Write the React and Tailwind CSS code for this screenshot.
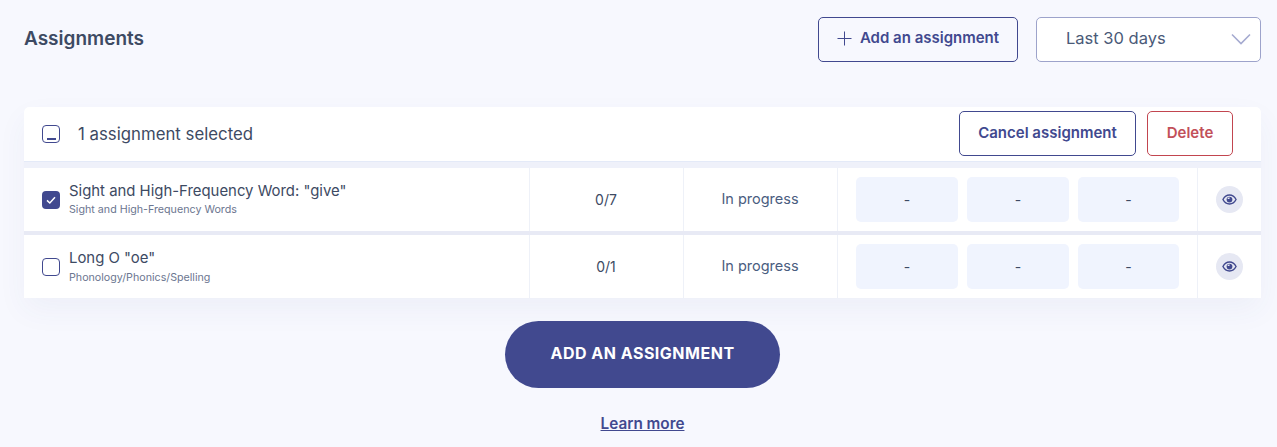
import React from "react";

function Eye() {
  return (
    <svg width="15" height="15" viewBox="0 0 24 24" fill="none" aria-hidden="true">
      <path d="M1.5 12C4 7.2 7.6 4.8 12 4.8S20 7.2 22.5 12C20 16.8 16.4 19.2 12 19.2S4 16.8 1.5 12Z" stroke="#41498f" strokeWidth="2.2" />
      <circle cx="12" cy="12" r="4.6" fill="#41498f" />
      <path d="M12 8.5a3.5 3.5 0 0 0-3.4 2.8h3.4Z" fill="#e6e8f3" />
    </svg>
  );
}

function Row({ title, sub, score, checked, last }) {
  return (
    <div className="flex h-[63px] bg-white">
      <div className="flex w-[506px] items-center border-r border-[#eef1f8] pl-[18px]">
        {checked ? (
          <div className="flex h-[18px] w-[18px] items-center justify-center rounded-[4px] bg-[#41498f]">
            <svg width="12" height="12" viewBox="0 0 12 12" fill="none">
              <path d="M2 6.4 4.8 9 10 3.2" stroke="#fff" strokeWidth="1.5" />
            </svg>
          </div>
        ) : (
          <div className="h-[18px] w-[18px] rounded-[4px] border-[1.5px] border-[#41498f] bg-white" />
        )}
        <div className="ml-[9px] flex flex-col self-start pt-[14px]">
          <span className="text-[14.9px] leading-[18px] text-[#3d4a63]">{title}</span>
          <span className={"text-[10.7px] leading-[16px] text-[#6c7690] " + (last ? "mt-[2.5px]" : "mt-[1.5px]")}>{sub}</span>
        </div>
      </div>
      <div className="flex w-[154px] items-center justify-center border-r border-[#eef1f8] pb-[1px] pr-[1px] text-[14px] text-[#3d4a63]">{score}</div>
      <div className="flex w-[154px] items-center justify-center border-r border-[#eef1f8] pb-[1px] pr-[1px] text-[14.5px] text-[#4a5d80]">In progress</div>
      <div className="flex w-[360px] items-center border-r border-[#eef1f8] pl-[18px]">
        <div className="grid grid-cols-[102px_102px_101px] gap-[9px]">
          {[0, 1, 2].map((i) => (
            <div key={i} className="flex h-[45px] items-center justify-center rounded-[5px] bg-[#f0f4fe] text-[14px] text-[#3d4a63]">-</div>
          ))}
        </div>
      </div>
      <div className="flex flex-1 items-center justify-center">
        <div className="flex h-[27px] w-[27px] items-center justify-center rounded-full bg-[#e6e8f3]">
          <Eye />
        </div>
      </div>
    </div>
  );
}

export default function App() {
  return (
    <div className="h-[447px] w-[1277px] overflow-hidden bg-[#f7f8fe] pl-[24px] pr-[16px] pt-[17px] font-['Inter','Noto_Sans',sans-serif]">
      <div className="flex h-[45px] items-center">
        <h1 className="pb-[2px] text-[19px] font-semibold leading-none text-[#3d4a63]">Assignments</h1>
        <button className="ml-auto flex h-[45px] w-[200px] items-center justify-center gap-[8px] rounded-[5px] border border-[#41498f] pb-[2px] text-[15px] font-semibold text-[#41498f]">
          <svg width="15" height="15" viewBox="0 0 15 15" fill="none"><path d="M7.5 0.5v14M0.5 7.5h14" stroke="#41498f" strokeWidth="1" /></svg>
          Add an assignment
        </button>
        <div className="ml-[18px] flex h-[45px] w-[225px] items-center justify-between rounded-[5px] border border-[#9da3cb] bg-white pb-[2px] pl-[29px] pr-[9px] text-[16.5px] text-[#4a5a78]">
          <span>Last 30 days</span>
          <svg width="20" height="12" viewBox="0 0 20 12" fill="none"><path d="M1 1.5 10 10.5 19 1.5" stroke="#a5aad0" strokeWidth="1.6" /></svg>
        </div>
      </div>

      <div className="mt-[45px] rounded-t-[5px] bg-[#eff1fa] shadow-[0_12px_30px_rgba(65,73,143,0.05)]">
        <div className="flex h-[55px] items-center rounded-t-[5px] border-b border-[#e4eaf8] bg-white pl-[18px] pr-[28px]">
          <div className="flex h-[18px] w-[18px] items-end justify-center rounded-[4px] border-[1.5px] border-[#41498f] pb-[2px]">
            <div className="h-[2px] w-[9px] bg-[#41498f]" />
          </div>
          <span className="ml-[18px] pt-[2px] text-[16.8px] text-[#3d4a63]">1 assignment selected</span>
          <button className="ml-auto mb-[1px] h-[45px] w-[177px] rounded-[5px] border border-[#41498f] text-[15px] font-semibold text-[#41498f]">Cancel assignment</button>
          <button className="ml-[11px] mb-[1px] h-[45px] w-[86px] rounded-[5px] border border-[#c2454f] text-[15px] font-semibold text-[#c2505a]">Delete</button>
        </div>
        <div className="h-[6px]" />
        <Row title={'Sight and High-Frequency Word: "give"'} sub="Sight and High-Frequency Words" score="0/7" checked />
        <div className="h-[4px] bg-[#e8eaf5]" />
        <Row title={'Long O "oe"'} sub="Phonology/Phonics/Spelling" score="0/1" last />
      </div>

      <div className="flex flex-col items-center">
        <button className="mt-[23px] h-[67px] w-[275px] rounded-full bg-[#41498f] pb-[3px] text-[16px] font-bold tracking-[0.5px] text-white">ADD AN ASSIGNMENT</button>
        <a href="#" className="mt-[26px] text-[15.3px] font-semibold leading-[20px] text-[#41498f] underline">Learn more</a>
      </div>
    </div>
  );
}
